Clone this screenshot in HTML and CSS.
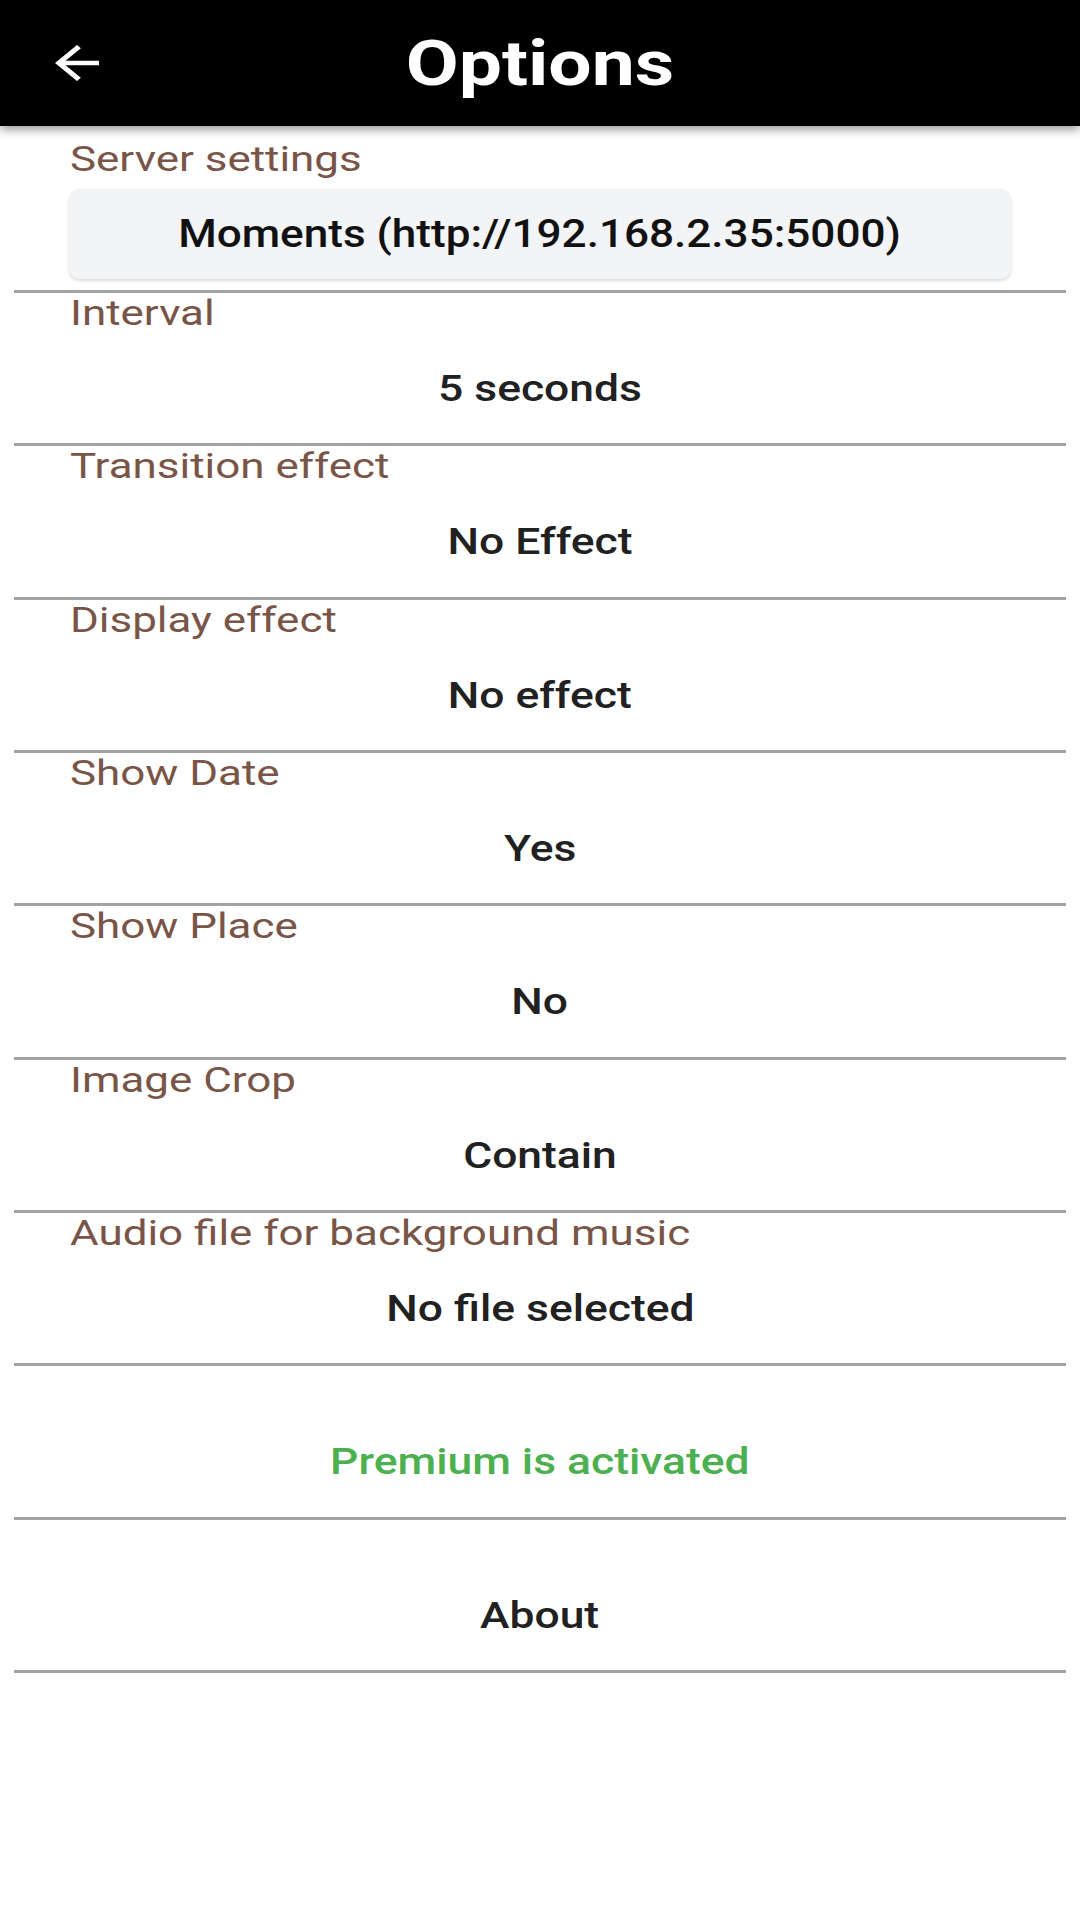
FILE: index.html
```html
<!DOCTYPE html>
<html lang="en">
<head>
<meta charset="utf-8">
<title>Options</title>
<link rel="stylesheet" href="styles.css">
</head>
<body>
<header class="appbar">
  <div class="appbar-left">
    <svg class="back-icon" width="44" height="36" viewBox="4 4 16 16" preserveAspectRatio="none" aria-hidden="true">
      <path d="M20 11H7.83l5.59-5.59L12 4l-8 8 8 8 1.41-1.41L7.830 13H20v-2z" fill="#ffffff"/>
    </svg>
  </div>
  <h1 class="appbar-title"><span class="title-text">Options</span></h1>
  <div class="appbar-right"></div>
</header>

<main class="options">
  <section class="server">
    <div class="label"><span class="label-text">Server settings</span></div>
    <div class="server-btn"><span class="btn-text">Moments (http://192.168.2.35:5000)</span></div>
  </section>

  <div class="option">
    <div class="label"><span class="label-text">Interval</span></div>
    <div class="value"><span class="value-text">5 seconds</span></div>
  </div>
  <div class="option">
    <div class="label"><span class="label-text">Transition effect</span></div>
    <div class="value"><span class="value-text">No Effect</span></div>
  </div>
  <div class="option">
    <div class="label"><span class="label-text">Display effect</span></div>
    <div class="value"><span class="value-text">No effect</span></div>
  </div>
  <div class="option">
    <div class="label"><span class="label-text">Show Date</span></div>
    <div class="value"><span class="value-text">Yes</span></div>
  </div>
  <div class="option">
    <div class="label"><span class="label-text">Show Place</span></div>
    <div class="value"><span class="value-text">No</span></div>
  </div>
  <div class="option">
    <div class="label"><span class="label-text">Image Crop</span></div>
    <div class="value"><span class="value-text">Contain</span></div>
  </div>
  <div class="option">
    <div class="label"><span class="label-text">Audio file for background music</span></div>
    <div class="value"><span class="value-text">No file selected</span></div>
  </div>
  <div class="option">
    <div class="label"></div>
    <div class="value premium"><span class="value-text">Premium is activated</span></div>
  </div>
  <div class="option option-last">
    <div class="label"></div>
    <div class="value"><span class="value-text">About</span></div>
  </div>
</main>
</body>
</html>
```

FILE: styles.css
```css
* {
  box-sizing: border-box;
}

html, body {
  margin: 0;
  padding: 0;
  background: #ffffff;
}

body {
  width: 1080px;
  min-height: 1920px;
  font-family: Roboto, "Liberation Sans", sans-serif;
  color: #212121;
}

/* App bar */
.appbar {
  position: relative;
  z-index: 2;
  height: 126px;
  background: #000000;
  display: grid;
  grid-template-columns: 1fr auto 1fr;
  align-items: center;
  box-shadow: 0 3px 10px rgba(0, 0, 0, 0.45);
}

.appbar-left {
  padding-left: 55px;
  display: flex;
  align-items: center;
}

.back-icon {
  display: block;
}

.appbar-title {
  margin: 0;
  font-size: 63px;
  font-weight: 700;
  color: #ffffff;
  line-height: 1;
  text-align: center;
}

.title-text {
  display: inline-block;
  transform: scaleX(1.22);
  transform-origin: center;
}

/* Content */
.options {
  margin: 0 14px;
}

.server {
  height: 164px;
  padding-top: 13px;
}

.label {
  height: 42px;
  padding-left: 56px;
  font-size: 35px;
  line-height: 42px;
  color: #795548;
  white-space: nowrap;
}

.label-text {
  display: inline-block;
  transform: scaleX(1.255);
  transform-origin: left center;
}

.server-btn {
  margin: 8px 0 0 55px;
  width: 942px;
  height: 90px;
  background: #f3f4f6;
  border-radius: 10px;
  box-shadow: 0 2px 3px rgba(0, 0, 0, 0.13), 0 0 1px rgba(0, 0, 0, 0.06);
  display: flex;
  align-items: center;
  justify-content: center;
  font-size: 38px;
  font-weight: 500;
  color: #111111;
  white-space: nowrap;
}

.btn-text {
  display: inline-block;
  transform: scaleX(1.16);
  transform-origin: center;
}

.option {
  height: 153.33px;
  border-top: 3px solid #a3a3a3;
}

.option-last {
  height: 156.33px;
  border-bottom: 3px solid #a3a3a3;
}

.value {
  margin-top: 32px;
  height: 44px;
  line-height: 44px;
  text-align: center;
  font-size: 37px;
  font-weight: 500;
  color: #212121;
  white-space: nowrap;
}

.value.premium {
  color: #4caf50;
}

.value-text {
  display: inline-block;
  transform: scaleX(1.2);
  transform-origin: center;
}
```
